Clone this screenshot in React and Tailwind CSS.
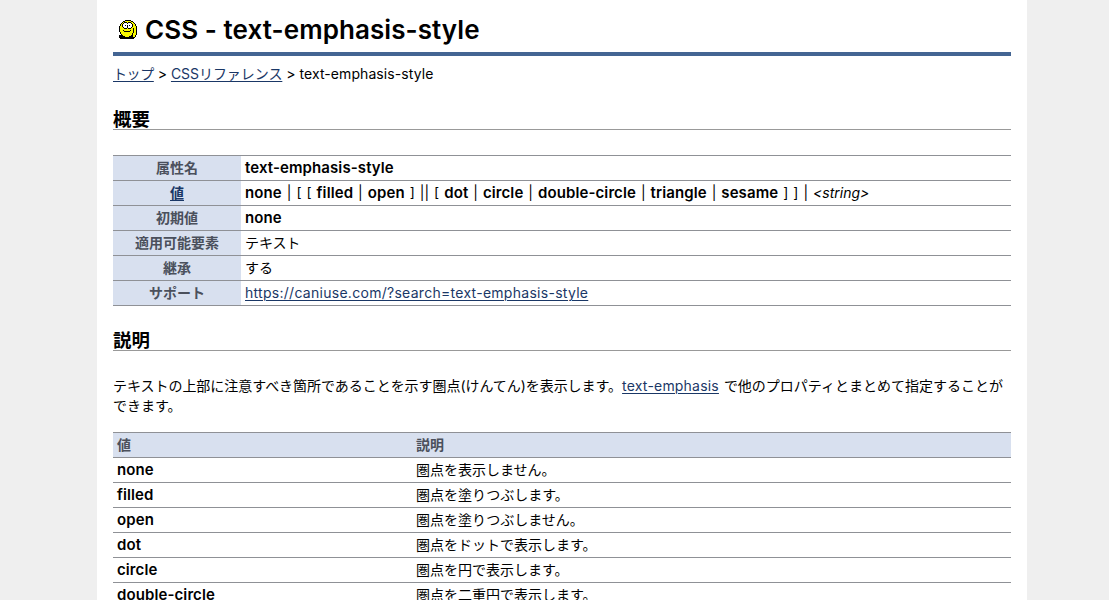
import React from "react";

const link = "text-[#1a3766] underline underline-offset-2 decoration-1";

const mascotRows = [
  "......kkkkkk......",
  "....kkyyyyyykk....",
  "...kykkkykkkyyk...",
  "..kykwwwkwwwkyyk..",
  ".kykwwwwwwwwwkyyk.",
  ".kykwwkwkwkwwkyyk.",
  "kyykwwwwkwwwwkyyyk",
  "kyyykwwwkwwwkyyyyk",
  "kyyyykkkykkkyykyyk",
  "kyyyyyyyyyyyyykyyk",
  "kyyykyyyyyykyykyyk",
  "kyyyykkkkkkyyykyyk",
  ".kyyyyyyyyyyyykyyk",
  ".kyyyyyyyyyyykyyyk",
  "..kyyyyyyyyyykyyyk",
  "kkkkyyyyyyyykkyyk.",
  "kkkkkkyyyykkkkyyk.",
  "kkkkkkkkkkkkkkkk..",
  ".kkkkkkkkkkkkkk...",
];
const mascotFill = { k: "#000", y: "#f8f800", w: "#fff" };

function Mascot() {
  return (
    <svg width="18" height="19" viewBox="0 0 18 19" shapeRendering="crispEdges" className="mr-[8px] mb-px ml-px shrink-0" aria-hidden="true">
      {mascotRows.flatMap((row, y) =>
        [...row].map((c, x) => (c === "." ? null : <rect key={`${x}-${y}`} x={x} y={y} width="1" height="1" fill={mascotFill[c]} />))
      )}
    </svg>
  );
}

function Heading({ children, className }) {
  return (
    <h2 className={`h-[22px] border-b border-[#999] text-[18.4px] leading-[22px] font-bold ${className}`}>{children}</h2>
  );
}

function Property({ name, children }) {
  return (
    <tr className="h-[25px] border-y border-[#8f9196]">
      <th className="w-[128px] bg-[#d8e0ef] p-0 text-center font-bold text-[#4b505c]">{name}</th>
      <td className="py-0 pr-1 pl-1">{children}</td>
    </tr>
  );
}

const B = ({ children }) => <b className="text-[15px] leading-5 font-semibold tracking-[0.1px]">{children}</b>;

const values = [
  ["none", "圏点を表示しません。"],
  ["filled", "圏点を塗りつぶします。"],
  ["open", "圏点を塗りつぶしません。"],
  ["dot", "圏点をドットで表示します。"],
  ["circle", "圏点を円で表示します。"],
  ["double-circle", "圏点を二重円で表示します。"],
];

export default function App() {
  return (
    <div className="h-[600px] overflow-hidden bg-[#efefef] font-[Inter,'Noto_Sans_CJK_JP',sans-serif] text-[14px] leading-5 text-black">
      <main className="ml-[97px] h-[620px] w-[930px] bg-white px-4">
        <h1 className="flex h-14 items-center border-b-4 border-[#446593] pt-[8px] pl-[5px] text-[26px] font-semibold whitespace-nowrap">
          <Mascot />
          <span className="tracking-[0.07px]">CSS - text-emphasis-style</span>
        </h1>
        <nav className="mt-2 whitespace-nowrap">
          <a className={`${link} tracking-[-0.4px]`}>トップ</a> &gt; <a className={`${link} tracking-[-0.06px]`}>CSSリファレンス</a> &gt; <span className="tracking-[0.08px]">text-emphasis-style</span>
        </nav>

        <Heading className="mt-6">概要</Heading>
        <table className="mt-[25px] w-full table-fixed border-collapse leading-5 whitespace-nowrap">
          <tbody>
            <Property name="属性名"><B>text-emphasis-style</B></Property>
            <Property name={<a className={link}>値</a>}>
              <span className="[word-spacing:1.05px]">
                <B>none</B> | [ [ <B>filled</B> | <B>open</B> ] || [ <B>dot</B> | <B>circle</B> | <B>double-circle</B> | <B>triangle</B> | <B>sesame</B> ] ] | <i>&lt;string&gt;</i>
              </span>
            </Property>
            <Property name="初期値"><B>none</B></Property>
            <Property name="適用可能要素"><span className="tracking-[-0.1px]">テキスト</span></Property>
            <Property name="継承">する</Property>
            <Property name="サポート"><a className={`${link} tracking-[0.28px]`}>https://caniuse.com/?search=text-emphasis-style</a></Property>
          </tbody>
        </table>

        <Heading className="mt-[23px]">説明</Heading>
        <p className="mt-[25px] whitespace-nowrap">
          <span className="tracking-[-0.04px]">テキストの上部に注意すべき箇所であることを示す圏点(けんてん)を表示します。</span><a className={`${link} tracking-[0.2px]`}>text-emphasis</a><span className="[word-spacing:1px]"> で他のプロパティとまとめて指定することが</span><br />
          できます。
        </p>
        <table className="mt-4 w-full table-fixed border-collapse whitespace-nowrap">
          <thead>
            <tr className="h-[25px] border-y border-[#8f9196] bg-[#d8e0ef] text-left text-[#4b505c]">
              <th className="w-[299px] py-0 pl-1">値</th>
              <th className="py-0 pl-1">説明</th>
            </tr>
          </thead>
          <tbody>
            {values.map(([value, text]) => (
              <tr key={value} className="h-[25px] border-y border-[#8f9196]">
                <td className="py-0 pl-1"><B>{value}</B></td>
                <td className="py-0 pl-1">{text}</td>
              </tr>
            ))}
          </tbody>
        </table>
      </main>
    </div>
  );
}
